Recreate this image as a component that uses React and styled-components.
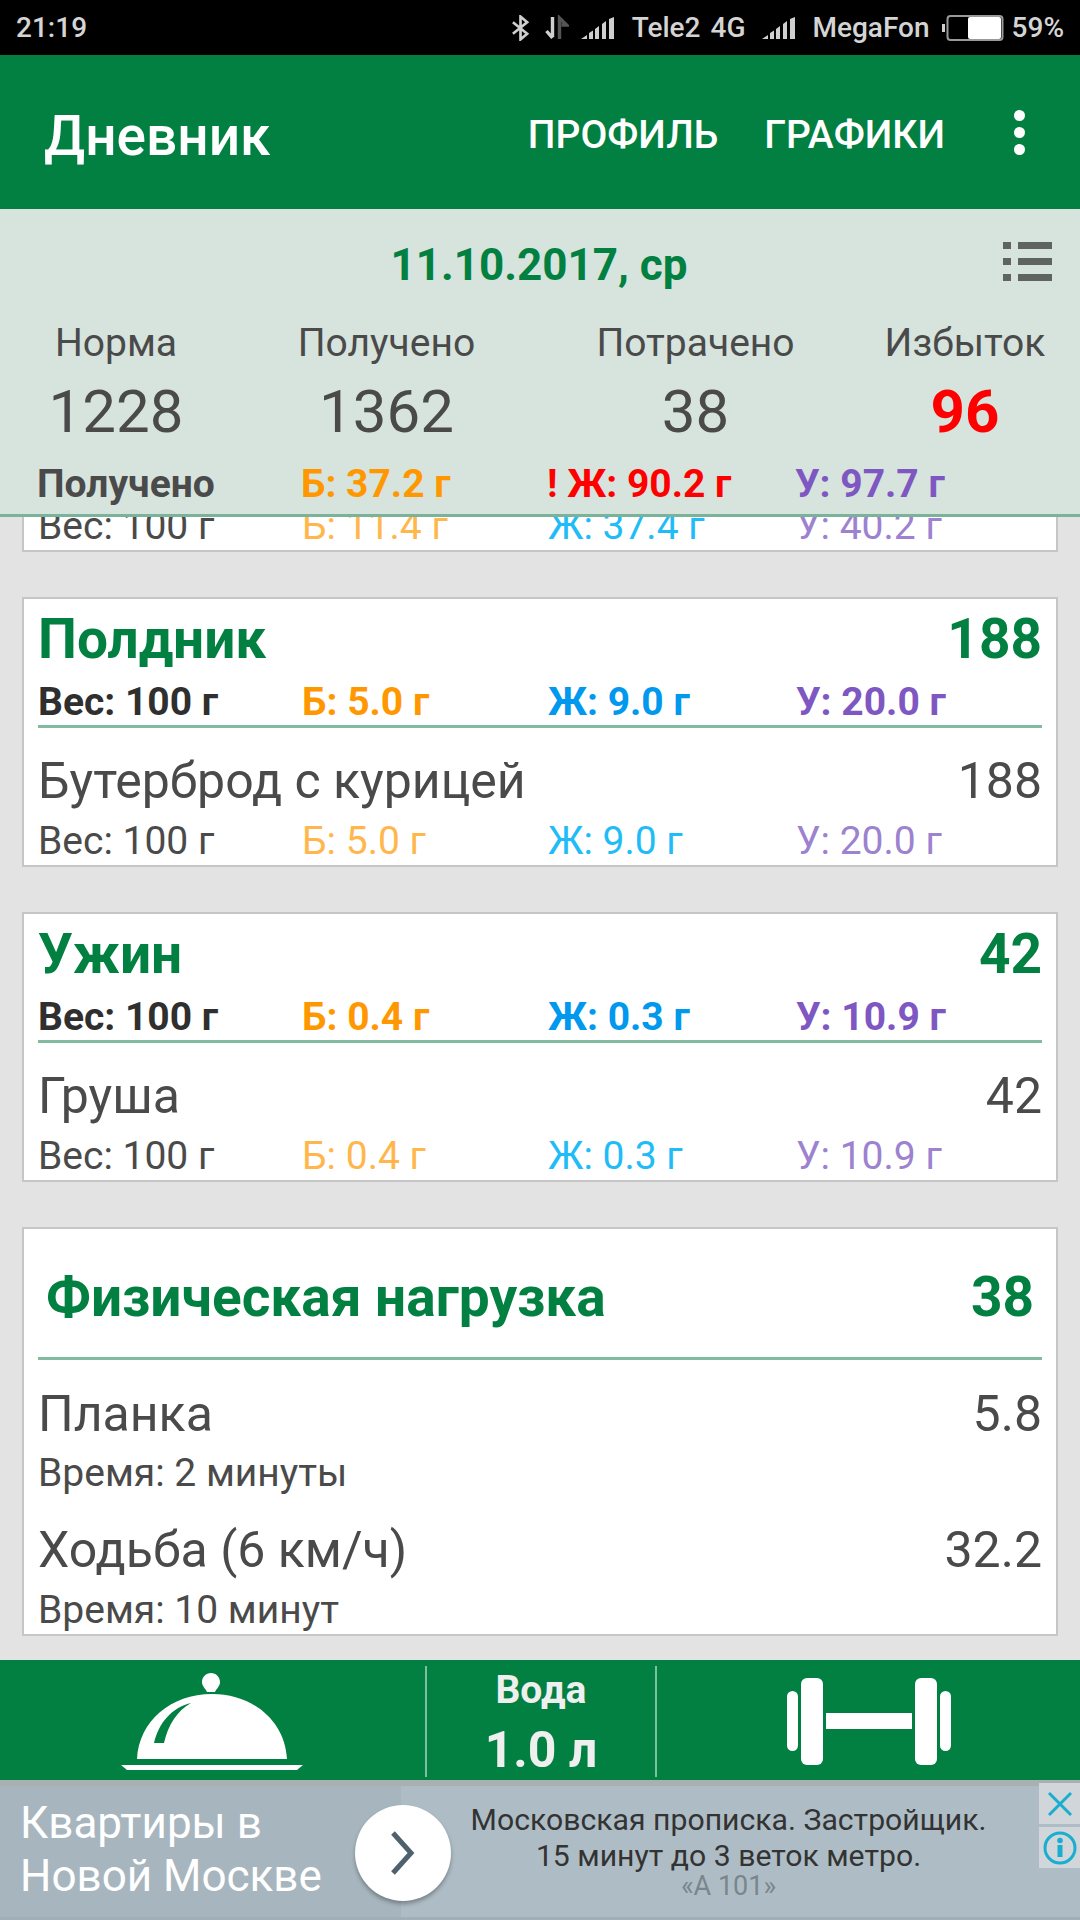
import React from 'react';
import styled, { createGlobalStyle } from 'styled-components';

const Global = createGlobalStyle`
  html, body { margin: 0; padding: 0; background: #e3e3e3; }
  * { box-sizing: border-box; }
  body { font-family: Roboto, "Noto Sans", sans-serif; }
`;

const C = { green: '#028041', text: '#4a4a4a', dark: '#2f2f2f', orange: '#ff9800', blue: '#0099ee', purple: '#7e57c2', red: '#ff0000' };
const L = { orange: '#ffb74d', blue: '#1fbcf8', purple: '#9c82cf' };

const Page = styled.div`
  width: 1080px; height: 1920px; display: flex; flex-direction: column; overflow: hidden; background: #e3e3e3;
`;
const StatusBar = styled.div`
  height: 55px; background: #000; color: #d4d4d4; display: flex; align-items: center; padding: 0 16px 0 16px;
  font-size: 28px; font-weight: 500; flex: none;
`;
const StatusRight = styled.div`
  margin-left: auto; display: flex; align-items: center;
`;
const StatusText = styled.span`
  margin-left: ${p => p.$ml || 0}px;
`;
const StatusIcon = styled.svg`
  margin-left: ${p => p.$ml || 0}px; display: block;
`;
const AppBar = styled.div`
  height: 154px; background: ${C.green}; display: flex; align-items: center; padding: 0 0 0 44px; color: #fff; flex: none;
`;
const Title = styled.div`
  font-size: 55px; font-weight: 500; flex: 1; line-height: 1; padding-top: 8px;
`;
const Action = styled.div`
  font-size: 39px; font-weight: 500; margin-top: 5px; margin-right: ${p => p.$mr}px;
`;
const Dots = styled.div`
  display: flex; flex-direction: column; gap: 6px; margin-right: 55px;
`;
const Dot = styled.div`
  width: 11px; height: 11px; border-radius: 50%; background: #fff;
`;
const Summary = styled.div`
  height: 308px; background: #d6e4dd; border-bottom: 3px solid #7ab39a; flex: none; display: flex; flex-direction: column;
`;
const DateRow = styled.div`
  height: 94px; position: relative; display: flex; justify-content: center; align-items: center; padding-top: 18px;
  padding-right: 2px; color: ${C.green}; font-size: 44px; font-weight: 700;
`;
const ListIcon = styled.svg`
  position: absolute; right: 28px; top: 33px;
`;
const Stats = styled.div`
  display: grid; grid-template-columns: 232px 309px 309px 1fr; padding-top: 20px; text-align: center;
`;
const Stat = styled.div`
  display: flex; flex-direction: column; align-items: center; color: ${C.text};
`;
const StatLabel = styled.div`
  font-size: 39px; line-height: 40px;
`;
const StatValue = styled.div`
  font-size: 60px; line-height: 68px; margin-top: 15px; font-weight: ${p => p.$hot ? 700 : 400}; color: ${p => p.$hot ? C.red : C.text};
`;
const MacroGrid = styled.div`
  display: grid; grid-template-columns: 264px 246px 248px 1fr; align-items: center;
`;
const TotalRow = styled(MacroGrid)`
  padding: 18px 0 0 37px; font-size: 39px; font-weight: 700; line-height: 40px;
`;
const Cell = styled.div`
  color: ${p => p.$c}; white-space: nowrap;
`;
const List = styled.div`
  flex: 1; display: flex; flex-direction: column; padding: 0 22px; gap: 45px; min-height: 0;
`;
const Card = styled.div`
  background: #fff; border: 2px solid #c6c6c6; padding: 0 14px; flex: none; height: ${p => p.$h}px; overflow: hidden;
`;
const ClippedCard = styled(Card)`
  border-top: 0;
`;
const ClippedRow = styled(MacroGrid)`
  margin-top: -11px; font-size: 39px; line-height: 40px;
`;
const CardHead = styled.div`
  display: flex; justify-content: space-between; align-items: center; height: 64px; margin-top: 8px;
  color: ${C.green}; font-size: 55px; font-weight: 700;
`;
const BoldRow = styled(MacroGrid)`
  font-size: 39px; font-weight: 700; line-height: 40px; padding-bottom: 3px; border-bottom: 3px solid #82bba0; margin-top: 11px;
`;
const ItemHead = styled.div`
  display: flex; justify-content: space-between; align-items: center; color: ${C.text}; font-size: 50px; height: 56px; margin-top: ${p => p.$mt}px;
`;
const ItemRow = styled(MacroGrid)`
  font-size: 39px; line-height: 40px; margin-top: 12px;
`;
const ActivityHead = styled.div`
  display: flex; justify-content: space-between; align-items: center; height: 131px; padding: 8px 8px 0; border-bottom: 3px solid #82bba0;
  color: ${C.green}; font-size: 55px; font-weight: 700;
`;
const Note = styled.div`
  font-size: 39px; line-height: 40px; color: ${C.text}; margin-top: ${p => p.$mt}px;
`;
const BottomBar = styled.div`
  height: 120px; background: ${C.green}; display: grid; grid-template-columns: 427px 230px 1fr; align-items: stretch; padding: 6px 0; flex: none;
`;
const BarCell = styled.div`
  display: flex; flex-direction: column; align-items: center; justify-content: center;
  border-right: ${p => p.$div ? '2px solid #7fbf9f' : 'none'};
`;
const ClocheCell = styled(BarCell)`
  padding-right: 2px;
`;
const WaterLabel = styled.div`
  color: #efefef; font-size: 39px; font-weight: 700; line-height: 40px; margin-top: 4px;
`;
const WaterValue = styled.div`
  color: #efefef; font-size: 50px; font-weight: 700; line-height: 54px; margin-top: 13px;
`;
const Ad = styled.div`
  height: 140px; flex: none; background: #aebdc5; border-top: 6px solid #a9b0b2; border-bottom: 3px solid #9fb0b9; display: flex; position: relative;
`;
const AdLeft = styled.div`
  width: 401px; background: #a7b6be; flex: none; padding: 11px 0 0 20px; color: #fff; font-size: 44px; line-height: 53px;
`;
const AdRound = styled.div`
  position: absolute; left: 355px; top: 19px; width: 96px; height: 96px; border-radius: 50%; background: #fff;
  box-shadow: 0 3px 4px rgba(0,0,0,.3); display: flex; align-items: center; justify-content: center;
`;
const AdRight = styled.div`
  flex: 1; padding: 16px 80px 0 56px; text-align: center; color: #333; font-size: 30.2px; line-height: 36px; white-space: nowrap;
`;
const AdSub = styled.div`
  color: #79868d; font-size: 27px; line-height: 24px; margin-top: 0;
`;
const AdButtons = styled.div`
  position: absolute; right: 0; top: -3px; display: flex; flex-direction: column; gap: 3px;
`;
const AdButton = styled.div`
  width: 41px; height: 41px; background: #d0d6d9; display: flex; align-items: center; justify-content: center;
`;

const Macros = ({ first, b, j, u, light }) => (
  <>
    <Cell $c={light ? C.text : C.dark}>{first}</Cell>
    <Cell $c={light ? L.orange : C.orange}>Б: {b} г</Cell>
    <Cell $c={light ? L.blue : C.blue}>Ж: {j} г</Cell>
    <Cell $c={light ? L.purple : C.purple}>У: {u} г</Cell>
  </>
);

const Meal = ({ name, kcal, food, b, j, u }) => (
  <Card $h={270}>
    <CardHead><span>{name}</span><span>{kcal}</span></CardHead>
    <BoldRow><Macros first="Вес: 100 г" b={b} j={j} u={u} /></BoldRow>
    <ItemHead $mt={25}><span>{food}</span><span>{kcal}</span></ItemHead>
    <ItemRow><Macros first="Вес: 100 г" b={b} j={j} u={u} light /></ItemRow>
  </Card>
);

const Signal = ({ ml }) => (
  <StatusIcon $ml={ml} width="34" height="22" viewBox="0 0 34 22" fill="#cfcfcf">
    <path d="M0 22l6-4v4zM8 16l4-2.5V22H8zM14 12l4-3v13h-4zM21 7l4-3v18h-4zM28 2l5-2v22h-5z" />
  </StatusIcon>
);

const Cloche = () => (
  <svg width="182" height="98" viewBox="0 0 182 98" fill="#fff">
    <path d="M90 0c5 0 9 4 9 9 0 4-3 6-5 10h-8c-2-4-5-6-5-10 0-5 4-9 9-9z" />
    <path fillRule="evenodd" d="M16 86C18 48 50 21 91 21s73 27 75 65zM70 30C50 35 38 50 33 70h10c4-18 13-32 27-40z" />
    <path d="M0 92h182l-6 5H6z" />
  </svg>
);

const Dumbbell = () => (
  <svg width="164" height="87" viewBox="0 0 164 87" fill="#fff">
    <rect x="0" y="13" width="11" height="60" rx="5.5" />
    <rect x="14" y="0" width="22" height="87" rx="6" />
    <rect x="39" y="35" width="86" height="16" />
    <rect x="128" y="0" width="22" height="87" rx="6" />
    <rect x="153" y="13" width="11" height="60" rx="5.5" />
  </svg>
);

export default function App() {
  return (
    <Page>
      <Global />
      <StatusBar>
        <span>21:19</span>
        <StatusRight>
          <StatusIcon width="19" height="26" viewBox="0 0 20 26" fill="none" stroke="#cfcfcf" strokeWidth="2.8">
            <path d="M2 7l15 12-7 6V1l7 6L2 19" />
          </StatusIcon>
          <StatusIcon $ml={14} width="25" height="26" viewBox="0 0 24 26">
            <path d="M8 2v20M2 16l6 7" stroke="#cfcfcf" strokeWidth="3.4" fill="none" />
            <path d="M15 24V3l7 7h-5" stroke="#555" strokeWidth="3.4" fill="none" />
          </StatusIcon>
          <Signal ml={12} />
          <StatusText $ml={17}>Tele2</StatusText>
          <StatusText $ml={10}>4G</StatusText>
          <Signal ml={17} />
          <StatusText $ml={16}>MegaFon</StatusText>
          <StatusIcon $ml={12} width="62" height="26" viewBox="0 0 62 26">
            <rect x="0" y="9" width="3" height="8" fill="#cfcfcf" />
            <rect x="5.5" y="1" width="55" height="24" rx="3" fill="none" stroke="#999" strokeWidth="2" />
            <rect x="26" y="2" width="33" height="22" rx="2" fill="#fff" />
          </StatusIcon>
          <StatusText $ml={8}>59%</StatusText>
        </StatusRight>
      </StatusBar>
      <AppBar>
        <Title>Дневник</Title>
        <Action $mr={46}>ПРОФИЛЬ</Action>
        <Action $mr={69}>ГРАФИКИ</Action>
        <Dots><Dot /><Dot /><Dot /></Dots>
      </AppBar>
      <Summary>
        <DateRow>
          11.10.2017, ср
          <ListIcon width="49" height="39" viewBox="0 0 49 39" fill="#5f6361">
            <rect x="0" y="0" width="8" height="7" />
            <rect x="15" y="0" width="34" height="7" />
            <rect x="0" y="16" width="8" height="7" />
            <rect x="15" y="16" width="34" height="7" />
            <rect x="0" y="32" width="8" height="7" />
            <rect x="15" y="32" width="34" height="7" />
          </ListIcon>
        </DateRow>
        <Stats>
          <Stat><StatLabel>Норма</StatLabel><StatValue>1228</StatValue></Stat>
          <Stat><StatLabel>Получено</StatLabel><StatValue>1362</StatValue></Stat>
          <Stat><StatLabel>Потрачено</StatLabel><StatValue>38</StatValue></Stat>
          <Stat><StatLabel>Избыток</StatLabel><StatValue $hot>96</StatValue></Stat>
        </Stats>
        <TotalRow>
          <Cell $c={C.text}>Получено</Cell>
          <Cell $c={C.orange}>Б: 37.2 г</Cell>
          <Cell $c={C.red}>! Ж: 90.2 г</Cell>
          <Cell $c={C.purple}>У: 97.7 г</Cell>
        </TotalRow>
      </Summary>
      <List>
        <ClippedCard $h={35}>
          <ClippedRow><Macros first="Вес: 100 г" b="11.4" j="37.4" u="40.2" light /></ClippedRow>
        </ClippedCard>
        <Meal name="Полдник" kcal="188" food="Бутерброд с курицей" b="5.0" j="9.0" u="20.0" />
        <Meal name="Ужин" kcal="42" food="Груша" b="0.4" j="0.3" u="10.9" />
        <Card $h={409}>
          <ActivityHead><span>Физическая нагрузка</span><span>38</span></ActivityHead>
          <ItemHead $mt={26}><span>Планка</span><span>5.8</span></ItemHead>
          <Note $mt={11}>Время: 2 минуты</Note>
          <ItemHead $mt={29}><span>Ходьба (6 км/ч)</span><span>32.2</span></ItemHead>
          <Note $mt={12}>Время: 10 минут</Note>
        </Card>
      </List>
      <BottomBar>
        <ClocheCell $div><Cloche /></ClocheCell>
        <BarCell $div>
          <WaterLabel>Вода</WaterLabel>
          <WaterValue>1.0 л</WaterValue>
        </BarCell>
        <BarCell><Dumbbell /></BarCell>
      </BottomBar>
      <Ad>
        <AdLeft>Квартиры в<br />Новой Москве</AdLeft>
        <AdRound>
          <svg width="30" height="46" viewBox="0 0 30 46" fill="none" stroke="#4e626d" strokeWidth="5">
            <path d="M5 3l18 20L5 43" />
          </svg>
        </AdRound>
        <AdRight>
          Московская прописка. Застройщик.<br />15 минут до 3 веток метро.
          <AdSub>«А 101»</AdSub>
        </AdRight>
        <AdButtons>
          <AdButton>
            <svg width="26" height="26" viewBox="0 0 26 26" stroke="#19aed0" strokeWidth="3"><path d="M2 2l22 22M24 2L2 24" /></svg>
          </AdButton>
          <AdButton>
            <svg width="34" height="34" viewBox="0 0 34 34"><circle cx="17" cy="17" r="15" fill="none" stroke="#19aed0" strokeWidth="3" /><rect x="14.5" y="14" width="5" height="12" fill="#19aed0" /><circle cx="17" cy="9.5" r="2.8" fill="#19aed0" /></svg>
          </AdButton>
        </AdButtons>
      </Ad>
    </Page>
  );
}
